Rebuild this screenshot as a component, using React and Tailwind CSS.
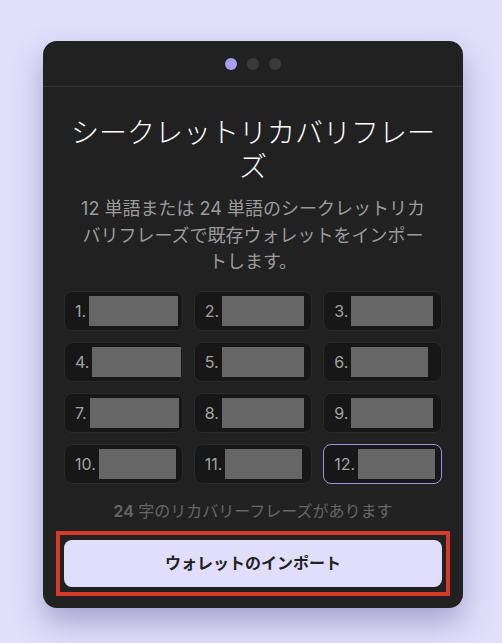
import React from 'react';

const words = [
  { n: 1, w: 89 },
  { n: 2, w: 82 },
  { n: 3, w: 82 },
  { n: 4, w: 89 },
  { n: 5, w: 82 },
  { n: 6, w: 77 },
  { n: 7, w: 89 },
  { n: 8, w: 82 },
  { n: 9, w: 82 },
  { n: 10, w: 77 },
  { n: 11, w: 77 },
  { n: 12, w: 77 },
];

export default function App() {
  return (
    <div className="min-h-[643px] w-full bg-[#e2dffb] pt-[41px] pl-[43px] font-['Inter','Noto_Sans_CJK_JP',sans-serif]">
      <div className="w-[420px] rounded-[14px] bg-[#212121] shadow-[0_14px_30px_rgba(60,50,120,0.35)]">
        {/* ステップ表示 */}
        <div className="flex h-[46px] items-center justify-center gap-[10px] border-b border-[#333333]">
          <span className="size-3 rounded-full bg-[#a99ef2]" />
          <span className="size-3 rounded-full bg-[#3a3a3a]" />
          <span className="size-3 rounded-full bg-[#3a3a3a]" />
        </div>

        <div className="px-[21px] pb-3 pt-[29px]">
          <h1 className="text-center text-[28px] font-light leading-[34px] text-white">
            シークレットリカバリフレーズ
          </h1>
          <p className="mt-3 whitespace-nowrap text-center text-[18px] leading-[26.5px] text-[#9b9b9b]">
            12 単語または 24 単語のシークレットリカ
            <br />
            バリフレーズで既存ウォレットをインポー
            <br />
            トします。
          </p>

          {/* 単語入力グリッド */}
          <div className="mt-[15px] grid grid-cols-3 gap-x-[11px] gap-y-[11px]">
            {words.map(item => (
              <div
                key={item.n}
                className={`flex h-10 items-center gap-[3px] rounded-lg bg-[#171717] pl-[10px] ${
                  item.n === 12 ? 'border border-[#9d92e6]' : 'border border-[#2a2a2a]'
                }`}
              >
                <span className="text-[16px] text-[#a3a3a3]">{item.n}.</span>
                <span className="h-[30px] bg-[#666666]" style={{ width: item.w }} />
              </div>
            ))}
          </div>

          <p className="mt-[15px] text-center text-[16px] leading-6 text-[#666666]">
            <span className="font-semibold">24</span> 字のリカバリーフレーズがあります
          </p>

          <div className="-mx-2 mt-2 border-4 border-[#d63a2b] px-1 py-[5px]">
            <button className="flex h-[47px] w-full items-center justify-center rounded-lg bg-[#e1defb] text-[16px] font-bold text-[#222222]">
              ウォレットのインポート
            </button>
          </div>
        </div>
      </div>
    </div>
  );
}
